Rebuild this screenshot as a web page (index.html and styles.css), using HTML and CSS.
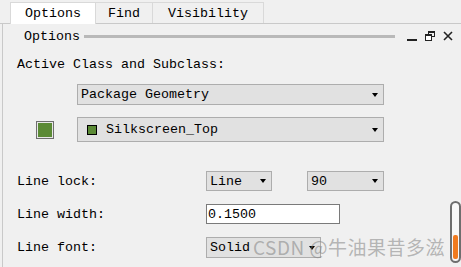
FILE: index.html
```html
<!doctype html>
<html lang="en">
  <head>
    <meta charset="UTF-8" />
    <meta name="viewport" content="width=device-width, initial-scale=1.0" />
    <title>Options</title>
    <link rel="stylesheet" href="styles.css">
  </head>
  <body>
    <div class="window">
      <div class="tabs">
        <div class="tab tab-options active">Options</div>
        <div class="tab tab-find">Find</div>
        <div class="tab tab-vis">Visibility</div>
      </div>

      <div class="panel">
        <div class="panel-head">
          <span class="title">Options</span>
          <span class="grip"></span>
          <span class="head-icons">
            <svg width="10" height="10" viewBox="0 0 10 10">
              <rect x="0" y="8" width="10" height="2" fill="#222" />
            </svg>
            <svg width="10" height="10" viewBox="0 0 10 10">
              <rect x="3.5" y="0.5" width="6" height="5" fill="none" stroke="#222" />
              <rect x="3.5" y="0.5" width="6" height="1.5" fill="#222" />
              <rect x="0.5" y="3.5" width="6" height="6" fill="#fff" stroke="#222" />
              <rect x="0.5" y="3.5" width="6" height="1.5" fill="#222" />
            </svg>
            <svg width="10" height="10" viewBox="0 0 10 10">
              <path d="M1 1 L9 9 M9 1 L1 9" stroke="#222" stroke-width="1.6" />
            </svg>
          </span>
        </div>

        <div class="section-label">Active Class and Subclass:</div>

        <div class="class-row">
          <div class="select select-wide">
            <span>Package Geometry</span>
            <span class="arrow"></span>
          </div>
        </div>

        <div class="class-row subclass-row">
          <span class="swatch"></span>
          <div class="select select-wide select-tall">
            <span class="mini-swatch"></span>
            <span>Silkscreen_Top</span>
            <span class="arrow"></span>
          </div>
        </div>

        <div class="field field-lock">
          <label>Line lock:</label>
          <div class="select select-lock">
            <span>Line</span>
            <span class="arrow"></span>
          </div>
          <div class="select select-angle">
            <span>90</span>
            <span class="arrow"></span>
          </div>
        </div>

        <div class="field">
          <label>Line width:</label>
          <div class="input">0.1500</div>
        </div>

        <div class="field">
          <label>Line font:</label>
          <div class="select select-font">
            <span>Solid</span>
            <span class="arrow"></span>
          </div>
        </div>
      </div>

      <div class="scroll"><div class="thumb"></div></div>
      <div class="watermark">CSDN @牛油果昔多滋</div>
    </div>
  </body>
</html>
```

FILE: styles.css
```css
body {
  margin: 0;
  background-color: #f0f0f0;
  font-family: 'Liberation Mono', 'DejaVu Sans Mono', monospace;
  font-size: 13.33px;
  color: #000;
}
.window {
  position: relative;
  width: 461px;
  height: 267px;
  overflow: hidden;
}
.tabs {
  display: flex;
  margin-top: 2px;
  padding-left: 10px;
  height: 21px;
  border-bottom: 1px solid #c9c9c9;
}
.tab {
  box-sizing: border-box;
  height: 21px;
  display: flex;
  align-items: center;
  justify-content: center;
  border: 1px solid #d9d9d9;
  border-bottom: none;
  border-left: none;
}
.tab.active {
  background: #fff;
  border-left: 1px solid #d9d9d9;
  height: 22px;
  margin-bottom: -1px;
}
.tab-options {
  width: 86px;
}
.tab-find {
  width: 57px;
}
.tab-vis {
  width: 111px;
}
.panel {
  margin-left: 2px;
  border-left: 1px solid #c9c9c9;
  padding-left: 14px;
  height: 243px;
}
.panel-head {
  display: flex;
  align-items: center;
  height: 24px;
  margin-left: 7px;
}
.panel-head .grip {
  flex: 1;
  height: 3px;
  margin-left: 4px;
  background: #b9b9b9;
}
.head-icons {
  display: flex;
  align-items: center;
  gap: 8px;
  margin-left: 12px;
  padding-right: 8px;
}
.head-icons svg {
  display: block;
}
.section-label {
  margin-top: 9px;
  line-height: 16px;
}
.class-row {
  display: flex;
  align-items: center;
  margin-top: 11px;
  padding-left: 60px;
}
.subclass-row {
  margin-top: 12px;
  padding-left: 19px;
}
.swatch {
  box-sizing: border-box;
  width: 18px;
  height: 18px;
  margin-right: 23px;
  border: 1px solid #6e6e6e;
  background: #5b8a35;
  box-shadow: inset 0 0 0 1px #e8e8e8;
}
.select {
  box-sizing: border-box;
  display: flex;
  align-items: center;
  height: 21px;
  padding-left: 3px;
  background: #e1e1e1;
  border: 1px solid #adadad;
  position: relative;
}
.select .arrow {
  margin-left: auto;
  margin-right: 5px;
  width: 0;
  height: 0;
  border-left: 3.5px solid transparent;
  border-right: 3.5px solid transparent;
  border-top: 4px solid #000;
}
.select-wide {
  width: 307px;
}
.select-tall {
  height: 25px;
}
.mini-swatch {
  box-sizing: border-box;
  width: 10px;
  height: 10px;
  margin-left: 6px;
  margin-right: 9px;
  border: 1px solid #000;
  background: #5b8a35;
}
.field {
  display: flex;
  align-items: center;
  margin-top: 13px;
}
.field-lock {
  margin-top: 29px;
}
.field label {
  width: 189px;
}
.select-lock {
  width: 66px;
  height: 20px;
}
.select-angle {
  width: 77px;
  height: 20px;
  margin-left: 35px;
}
.select-font {
  width: 115px;
}
.input {
  box-sizing: border-box;
  width: 134px;
  height: 20px;
  padding-left: 1px;
  display: flex;
  align-items: center;
  background: #fff;
  border: 1px solid #7a7a7a;
}
.scroll {
  position: absolute;
  left: 450px;
  top: 201px;
  box-sizing: border-box;
  width: 11px;
  height: 62px;
  border: 2px solid #6e6e6e;
  border-radius: 6px;
  background: #f8f8f8;
}
.thumb {
  position: absolute;
  left: 1px;
  top: 32px;
  width: 5px;
  height: 24px;
  border-radius: 2px;
  background: #f07a1e;
}
.watermark {
  position: absolute;
  left: 253px;
  top: 233px;
  font-family: 'Noto Sans CJK SC', 'Noto Sans', sans-serif;
  font-size: 19px;
  letter-spacing: 0.5px;
  line-height: 27px;
  color: rgba(130, 130, 130, 0.55);
  white-space: nowrap;
}
```
